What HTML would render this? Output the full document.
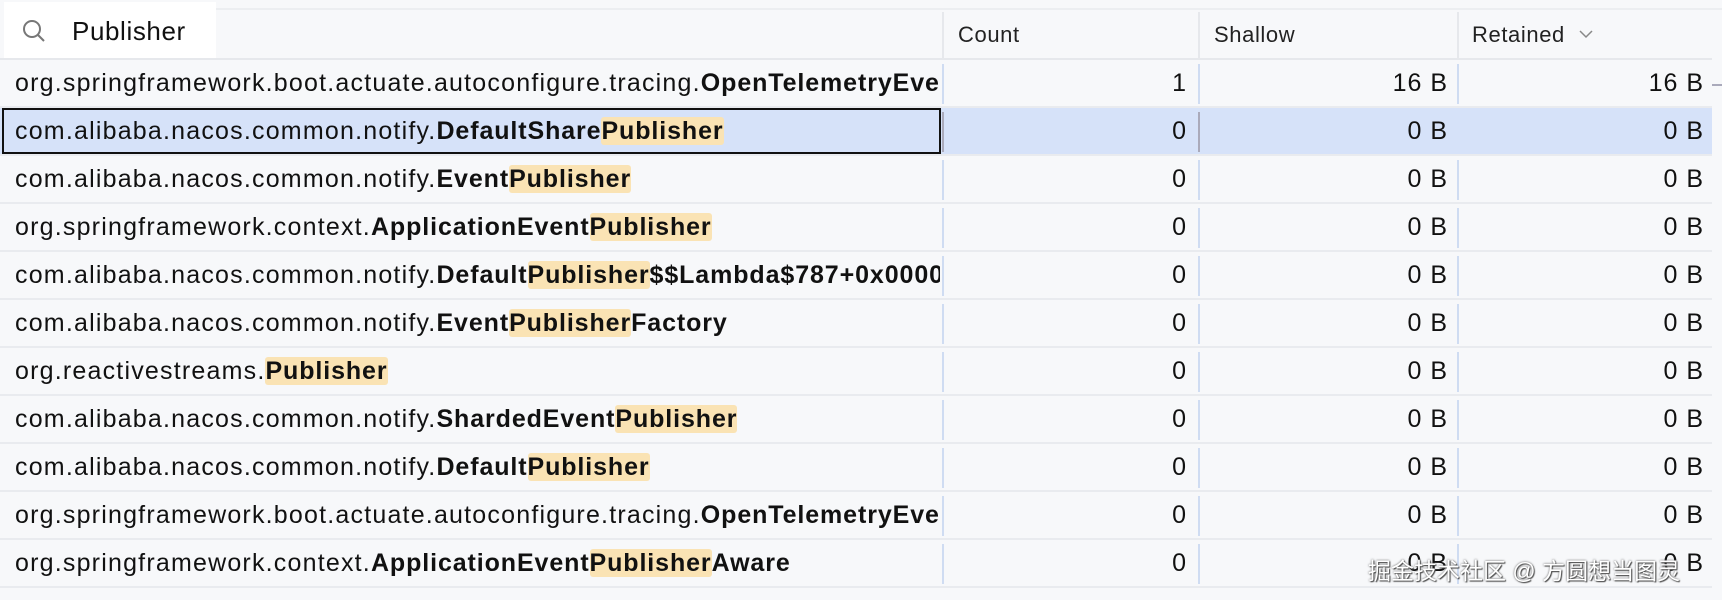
<!DOCTYPE html>
<html><head><meta charset="utf-8"><style>
*{margin:0;padding:0;box-sizing:border-box}
body{width:1722px;height:600px;background:#f7f8fa;font-family:"Liberation Sans","Noto Sans CJK SC",sans-serif;color:#111;position:relative;overflow:hidden}
.abs{position:absolute}
.search{left:4px;top:2px;width:212px;height:56px;background:#fff}
.row{position:absolute;left:0;width:1712px;height:48px;border-bottom:2px solid #e9ebef}
.row.sel{background:#d6e2f9}
.name{position:absolute;left:15px;top:0;line-height:47px;font-size:25px;letter-spacing:1.2px;white-space:nowrap;width:925px;overflow:hidden}
.name b{font-weight:bold;letter-spacing:0.9px}
.hl{background:#fae3b4;border-radius:3px}
.num{position:absolute;top:0;line-height:47px;font-size:25px;letter-spacing:1px;text-align:right}
.c1{right:525px}.c2{right:264px}.c3{right:8px}
.vs{position:absolute;top:4px;width:2px;height:40px;background:#cfdcf2}
.hdr{font-size:22px;letter-spacing:0.6px;color:#222;top:22px}
</style></head><body>
<div class="abs search"></div>
<svg class="abs" style="left:20px;top:17px" width="28" height="28" viewBox="0 0 28 28"><circle cx="12" cy="12" r="8" fill="none" stroke="#777" stroke-width="2"/><line x1="18" y1="18" x2="24" y2="24" stroke="#777" stroke-width="2"/></svg>
<div class="abs" style="left:72px;top:16px;font-size:26px;letter-spacing:0.6px">Publisher</div>
<div class="abs" style="left:942px;top:12px;width:2px;height:46px;background:#e6e8ec"></div>
<div class="abs" style="left:1198px;top:12px;width:2px;height:46px;background:#e6e8ec"></div>
<div class="abs" style="left:1457px;top:12px;width:2px;height:46px;background:#e6e8ec"></div>
<div class="abs" style="left:216px;top:8px;width:1506px;height:2px;background:#eceef1"></div>
<div class="abs hdr" style="left:958px">Count</div>
<div class="abs hdr" style="left:1214px">Shallow</div>
<div class="abs hdr" style="left:1472px">Retained</div>
<svg class="abs" style="left:1579px;top:29px" width="14" height="10" viewBox="0 0 14 10"><polyline points="1,2 7,8 13,2" fill="none" stroke="#888" stroke-width="1.5"/></svg>
<div class="abs" style="left:0;top:58px;width:1712px;height:2px;background:#e6e8ec"></div>
<div class="abs" style="left:1712px;top:84px;width:10px;height:2px;background:#aab"></div>

<div class="row" style="top:60px"><div class="name">org.springframework.boot.actuate.autoconfigure.tracing.<b>OpenTelemetryEventPublisher</b></div><div class="vs" style="left:942px"></div><div class="vs" style="left:1198px"></div><div class="vs" style="left:1457px"></div><div class="num c1">1</div><div class="num c2">16 B</div><div class="num c3">16 B</div></div>
<div class="row sel" style="top:108px"><div class="abs" style="left:2px;top:0;width:939px;height:46px;border:2px solid #111"></div><div class="name">com.alibaba.nacos.common.notify.<b>DefaultShare<span class="hl">Publisher</span></b></div><div class="vs" style="left:942px;background:#aab"></div><div class="vs" style="left:1198px;background:#aab"></div><div class="num c1">0</div><div class="num c2">0 B</div><div class="num c3">0 B</div></div>
<div class="row" style="top:156px"><div class="name">com.alibaba.nacos.common.notify.<b>Event<span class="hl">Publisher</span></b></div><div class="vs" style="left:942px"></div><div class="vs" style="left:1198px"></div><div class="vs" style="left:1457px"></div><div class="num c1">0</div><div class="num c2">0 B</div><div class="num c3">0 B</div></div>
<div class="row" style="top:204px"><div class="name">org.springframework.context.<b>ApplicationEvent<span class="hl">Publisher</span></b></div><div class="vs" style="left:942px"></div><div class="vs" style="left:1198px"></div><div class="vs" style="left:1457px"></div><div class="num c1">0</div><div class="num c2">0 B</div><div class="num c3">0 B</div></div>
<div class="row" style="top:252px"><div class="name">com.alibaba.nacos.common.notify.<b>Default<span class="hl">Publisher</span>$$Lambda$787+0x0000</b></div><div class="vs" style="left:942px"></div><div class="vs" style="left:1198px"></div><div class="vs" style="left:1457px"></div><div class="num c1">0</div><div class="num c2">0 B</div><div class="num c3">0 B</div></div>
<div class="row" style="top:300px"><div class="name">com.alibaba.nacos.common.notify.<b>Event<span class="hl">Publisher</span>Factory</b></div><div class="vs" style="left:942px"></div><div class="vs" style="left:1198px"></div><div class="vs" style="left:1457px"></div><div class="num c1">0</div><div class="num c2">0 B</div><div class="num c3">0 B</div></div>
<div class="row" style="top:348px"><div class="name">org.reactivestreams.<b><span class="hl">Publisher</span></b></div><div class="vs" style="left:942px"></div><div class="vs" style="left:1198px"></div><div class="vs" style="left:1457px"></div><div class="num c1">0</div><div class="num c2">0 B</div><div class="num c3">0 B</div></div>
<div class="row" style="top:396px"><div class="name">com.alibaba.nacos.common.notify.<b>ShardedEvent<span class="hl">Publisher</span></b></div><div class="vs" style="left:942px"></div><div class="vs" style="left:1198px"></div><div class="vs" style="left:1457px"></div><div class="num c1">0</div><div class="num c2">0 B</div><div class="num c3">0 B</div></div>
<div class="row" style="top:444px"><div class="name">com.alibaba.nacos.common.notify.<b>Default<span class="hl">Publisher</span></b></div><div class="vs" style="left:942px"></div><div class="vs" style="left:1198px"></div><div class="vs" style="left:1457px"></div><div class="num c1">0</div><div class="num c2">0 B</div><div class="num c3">0 B</div></div>
<div class="row" style="top:492px"><div class="name">org.springframework.boot.actuate.autoconfigure.tracing.<b>OpenTelemetryEventPublisher</b></div><div class="vs" style="left:942px"></div><div class="vs" style="left:1198px"></div><div class="vs" style="left:1457px"></div><div class="num c1">0</div><div class="num c2">0 B</div><div class="num c3">0 B</div></div>
<div class="row" style="top:540px"><div class="name">org.springframework.context.<b>ApplicationEvent<span class="hl">Publisher</span>Aware</b></div><div class="vs" style="left:942px"></div><div class="vs" style="left:1198px"></div><div class="vs" style="left:1457px"></div><div class="num c1">0</div><div class="num c2">0 B</div><div class="num c3">0 B</div></div>
<div class="abs" style="left:1368px;top:552px;font-size:23px;color:#fff;text-shadow:0 0 2px #555,1px 1px 1px #444;white-space:nowrap">掘金技术社区 @ 方圆想当图灵</div>
</body></html>
